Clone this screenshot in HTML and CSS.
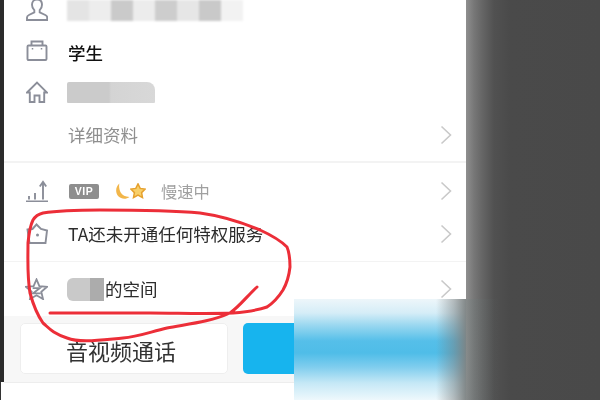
FILE: index.html
```html
<!DOCTYPE html>
<html lang="zh">
<head>
<meta charset="utf-8">
<title>资料卡</title>
<link rel="stylesheet" href="styles.css">
</head>
<body>
<div class="screen">
  <div class="edge"></div>
  <main class="panel">
    <section class="profile">
      <div class="row h-name">
        <svg class="icon" viewBox="0 0 22 22"><path d="M11 0.500c3.400 0 5 2.400 5 5.200 0 2.400-1 4.200-2.300 5.400v2.200l5.600 2.700c1.300.6 1.900 1.500 1.900 2.600v2.400H1v-2.400c0-1.100.6-2 1.900-2.600l5.400-2.700v-2.200C7 9.900 6 8.100 6 5.700 6 2.900 7.600.5 11 .5z"/></svg>
        <div class="mosaic">
          <span class="m1"></span><span class="m2"></span><span class="m3"></span><span class="m4"></span><span class="m5"></span><span class="m6"></span><span class="m7"></span><span class="m8"></span>
        </div>
      </div>
      <div class="row h-job">
        <svg class="icon case" viewBox="0 0 22 22"><rect x="1.500" y="5.500" width="19" height="14.500" rx="1"/><path d="M5.500 5.500V1.500h11v4"/><path class="tick" d="M6.500 8v1.500M15.500 8v1.500"/></svg>
        <span class="text strong">学生</span>
      </div>
      <div class="row h-home">
        <svg class="icon" viewBox="0 0 22 22"><path d="M1 11.500 11 1.500l10 10-2.800 0V21h-4.700v-6.500h-5V21H3.800v-9.500z"/></svg>
        <span class="smudge"></span>
      </div>
      <div class="row h-more">
        <span class="icon-gap"></span>
        <span class="text muted">详细资料</span>
        <svg class="chev" viewBox="0 0 12 20"><path d="M1.500 1.500 10.500 10l-9 8.500"/></svg>
      </div>
    </section>
    <section class="services">
      <div class="row h-vip">
        <svg class="icon chart" viewBox="0 0 22 22"><path d="M3 19.500v-3.500M9 19.500v-6.500M17 19.500V3M13.800 6.500 17 2l3.200 4.500M0 21.500h22"/></svg>
        <span class="vip">VIP</span>
        <svg class="moon" viewBox="0 0 16 16"><path d="M6 .5C2.300 3.500 2 9.500 5 12.500c2.900 2.900 7.500 3 10.500.6-3.800-.1-6.900-1.300-8.400-4.300C5.900 6.200 5.400 3.300 6 .5z"/></svg>
        <svg class="gold-star" viewBox="0 0 16 16"><path d="m8 .9 2.200 4.500 5 .7-3.600 3.500.9 5L8 12.200l-4.500 2.400.9-5L.8 6.100l5-.7z"/></svg>
        <span class="text slow">慢速中</span>
        <svg class="chev" viewBox="0 0 12 20"><path d="M1.500 1.500 10.500 10l-9 8.500"/></svg>
      </div>
      <div class="row h-priv">
        <svg class="icon" viewBox="0 0 22 22"><path d="M1.500 6.500 6.500 6 10.500 1.500 15 6l6 1.500-1.500 12.500h-16z"/><circle class="dot" cx="11.500" cy="12" r="1.500"/></svg>
        <span class="text">TA还未开通任何特权服务</span>
        <svg class="chev" viewBox="0 0 12 20"><path d="M1.500 1.500 10.500 10l-9 8.500"/></svg>
      </div>
      <div class="row h-space">
        <svg class="icon star" viewBox="0 0 24 23"><path d="m12 1.500 3 7 8 .7-6 5.200 1.800 7.600L12 18l-6.800 4 1.800-7.600-6-5.200 8-.7z"/><path d="M8 10.500h7.500l-7 5.500h8"/></svg>
        <span class="name-blur"><span class="nb1"></span><span class="nb2"></span></span>
        <span class="text">的空间</span>
        <svg class="chev" viewBox="0 0 12 20"><path d="M1.500 1.500 10.500 10l-9 8.500"/></svg>
      </div>
    </section>
    <footer class="actions">
      <div class="btn">音视频通话</div>
      <div class="btn-primary"></div>
    </footer>
    <div class="bottom"></div>
  </main>
  <div class="shade"></div>
  <div class="blur"></div>
  <div class="blur-tail"></div>
  <svg class="scribble" viewBox="0 0 600 400"><path d="M257 287C247 296 240 306 230 313 210 322 188 324 167 328 150 332 137 337 123 338 100 340 80 343 67 338 52 333 49 328 43 323 36 313 33 304 30 293 27 275 28 258 28 243 29 232 30 226 33 220 36 215 39 214 43 213 62 210 80 210 100 210 135 210 168 210 200 213 222 216 241 222 260 230 271 235 280 240 287 247 290 254 290 260 290 267 289 276 287 283 283 290 278 298 273 303 267 307 256 311 245 312 233 313 205 314 178 313 150 313 117 313 83 313 50 313"/></svg>
</div>
</body>
</html>
```

FILE: styles.css
```css
* { box-sizing: border-box; }
html, body { margin: 0; padding: 0; }
body { width: 600px; height: 400px; overflow: hidden; background: #fff; }
.screen { position: relative; display: flex; width: 600px; height: 400px; overflow: hidden; font-family: "Noto Sans CJK SC", "Noto Sans", sans-serif; }
.edge { flex: 0 0 4px; height: 400px; background: linear-gradient(#2b2b2b, #2b2b2b) left top / 4px 382px no-repeat, linear-gradient(#333, #333) left top / 1px 400px no-repeat, #fff; }
.panel { flex: 0 0 462px; display: flex; flex-direction: column; background: #fff; }
.shade { flex: 1; background: linear-gradient(90deg, #8f8f8f 0, #777 8px, #666 16px, #515151 28px, #4a4a4a 44px, #494949 100%); }

.profile { margin-top: -11px; border-bottom: 2px solid #f3f3f3; }
.services { flex: none; }
.row { display: flex; align-items: center; padding-left: 22px; padding-right: 14px; }
.h-name { height: 42px; }
.h-job { height: 44px; }
.h-home { height: 34px; }
.h-more { height: 52px; }
.h-vip { height: 56px; }
.h-priv { height: 42px; padding-bottom: 12px; }
.h-space { height: 55px; border-top: 1px solid #f3f3f3; }

.icon { flex: none; width: 22px; height: 22px; margin-right: 20px; fill: none; stroke: #8b8e99; stroke-width: 1.900; filter: blur(.35px); }
.icon .dot { fill: #8b8e99; stroke: none; }
.icon .tick { stroke-width: 1.500; }
.case { margin-top: -2px; margin-bottom: 2px; }
.chart { margin-top: 0; }
.star { width: 23px; margin-left: -1px; }
.icon-gap { flex: none; width: 42px; }
.chev { flex: none; margin-left: auto; width: 12px; height: 20px; fill: none; stroke: #c9c9c9; stroke-width: 1.600; }

.text { font-size: 17.500px; line-height: 24px; color: #2c2c2c; white-space: nowrap; filter: blur(.35px); }
.strong { color: #111; font-weight: 500; }
.muted { color: #8e8e8e; }
.slow { margin-left: 15px; font-size: 16.300px; color: #a0a0a0; }

.mosaic { display: flex; height: 21px; align-self: flex-start; margin-top: 11px; margin-left: -1px; filter: blur(1px); }
.mosaic span { width: 22px; }
.m1 { background: #e4e4e4; }
.m2 { background: #ededed; }
.m3 { background: #cacaca; }
.m4 { background: #ececec; }
.m5 { background: #cdcdcd; }
.m6 { background: #e6e6e6; }
.m7 { background: #c9c9c9; }
.m8 { background: #f2f2f2; }

.smudge { display: block; width: 88px; height: 21px; margin-left: -1px; background: linear-gradient(90deg, #cbcbcb 0, #cbcbcb 42px, #d4d4d4 44px, #d8d8d8 100%); border-radius: 2px 8px 1px 1px; filter: blur(.6px); }

.vip { display: block; width: 30px; height: 15px; margin-left: 1px; margin-right: 14px; background: #8e8e8e; border-radius: 2px; color: #fff; font: 700 10.500px/15px "Liberation Sans", sans-serif; letter-spacing: .6px; text-align: center; filter: blur(.4px); }
.moon { flex: none; width: 17px; height: 17px; fill: #f2b64a; filter: blur(.3px); }
.gold-star { flex: none; width: 16px; height: 16px; fill: #f8d06a; stroke: #e6a12e; stroke-width: 1.500; filter: blur(.3px); }

.name-blur { display: flex; width: 37px; height: 23px; margin-left: -1px; margin-top: 1px; filter: blur(.7px); }
.nb1 { width: 23px; background: #c9c9c9; border-radius: 6px 0 0 6px; }
.nb2 { width: 14px; background: #acacac; }
.h-space .text { margin-left: 1px; }

.actions { display: flex; gap: 15px; height: 67px; padding: 7px 0 8px 16px; background: #f7f7f7; border-bottom: 1px solid #ededed; }
.btn { flex: 0 0 208px; display: flex; align-items: flex-start; justify-content: center; background: #fff; border: 1px solid #eeeeee; border-radius: 5px; font-size: 22px; line-height: 26px; color: #333; filter: blur(.3px); padding-right: 6px; padding-top: 13px; }
.btn-primary { flex: 1; background: #17b4ee; border-radius: 5px; }
.bottom { flex: 1; background: #fff; }

.blur { position: absolute; left: 294px; top: 299px; width: 172px; height: 101px; background:
  linear-gradient(90deg, rgba(255,255,255,0) 0, rgba(255,255,255,0) 142px, rgba(122,126,126,.5) 160px, rgba(125,130,130,.95) 172px),
  linear-gradient(180deg, #edf6fa 0, #d5edf7 14px, #9bd8f0 26px, #55bfe9 42px, #4fbde8 54px, #7fcdee 68px, #c5e8f6 84px, #eef8fc 101px); }
.blur-tail { position: absolute; left: 466px; top: 299px; width: 34px; height: 101px; background: linear-gradient(90deg, rgba(100,125,125,.18), rgba(80,90,90,0)); }

.scribble { position: absolute; left: 0; top: 0; width: 600px; height: 400px; fill: none; stroke: #ec2e38; stroke-width: 3; stroke-linecap: round; stroke-linejoin: round; }
```
